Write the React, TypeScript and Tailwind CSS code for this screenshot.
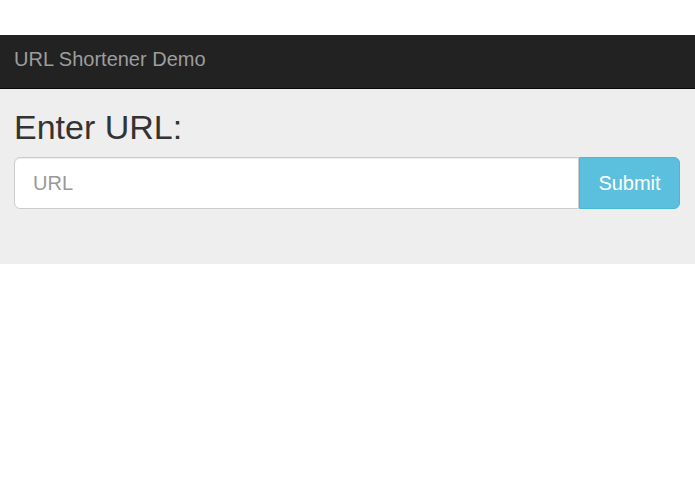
export default function App() {
  return (
    <div className="min-h-[494px] bg-white" style={{ fontFamily: '"Liberation Sans", Arial, sans-serif' }}>
      <div className="h-[35px]" />
      <nav className="h-[54px] bg-[#222222] border-b border-[#080808] flex items-center px-[14px] pb-[5px]">
        <span className="text-[20px] text-[#9d9d9d]">URL Shortener Demo</span>
      </nav>
      <div className="bg-[#eeeeee] h-[175px] pl-[14px] pr-[15px] pt-[18px]">
        <h1 className="text-[34px] leading-[40px] text-[#333333] font-normal">Enter URL:</h1>
        <div className="mt-[10px] flex h-[52px]">
          <input
            className="flex-1 h-full bg-white border border-[#cccccc] rounded-l-[6px] px-[18px] text-[20px] text-[#555] placeholder:text-[#999999] outline-none shadow-[inset_0_1px_1px_rgba(0,0,0,0.075)]"
            placeholder="URL"
          />
          <button className="w-[101px] h-full bg-[#5bc0de] border border-[#46b8da] rounded-r-[6px] text-white text-[20px]">
            Submit
          </button>
        </div>
      </div>
    </div>
  );
}
